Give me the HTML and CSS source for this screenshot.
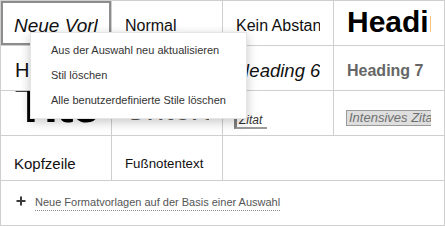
FILE: index.html
```html
<!DOCTYPE html>
<html lang="de">
<head>
<meta charset="utf-8">
<link rel="stylesheet" href="styles.css">
</head>
<body>
<div class="gallery">
  <div class="grid">
    <div class="cell selected"><div class="clip s-neue">Neue Vorlage</div></div>
    <div class="cell"><div class="clip s-normal">Normal</div></div>
    <div class="cell"><div class="clip s-normal">Kein Abstand</div></div>
    <div class="cell"><div class="clip s-h1">Heading 1</div></div>

    <div class="cell"><div class="clip s-h2">Heading 2</div></div>
    <div class="cell"><div class="clip s-h3">Heading 3</div></div>
    <div class="cell"><div class="clip s-h6">Heading 6</div></div>
    <div class="cell"><div class="clip s-h7">Heading 7</div></div>

    <div class="cell"><div class="clip s-title">Titel</div></div>
    <div class="cell"><div class="clip s-subtitle">Untertitel</div></div>
    <div class="cell"><div class="clip s-quote-wrap"><span class="s-quote">Zitat</span></div></div>
    <div class="cell"><div class="clip s-iquote-wrap"><span class="s-iquote">Intensives Zitat</span></div></div>

    <div class="cell"><div class="clip s-header">Kopfzeile</div></div>
    <div class="cell"><div class="clip s-footnote">Fußnotentext</div></div>
    <div class="cell filler"></div>
  </div>
  <div class="footer">
    <svg class="plus" width="10" height="10" viewBox="0 0 10 10"><path d="M5 0.5V9.5M0.5 5H9.5" stroke="#3a3a3a" stroke-width="2"/></svg>
    <span class="new-link">Neue Formatvorlagen auf der Basis einer Auswahl</span>
  </div>

  <div class="menu">
    <div class="menu-item">Aus der Auswahl neu aktualisieren</div>
    <div class="menu-item">Stil löschen</div>
    <div class="menu-item">Alle benutzerdefinierte Stile löschen</div>
  </div>
</div>
</body>
</html>
```
FILE: styles.css
```css
html, body {
  margin: 0;
  padding: 0;
  background: #fff;
}
body {
  font-family: "Liberation Sans", Arial, sans-serif;
  color: #111;
}
.gallery {
  position: relative;
  width: 444px;
  border-left: 1px solid #cfcfcf;
  border-top: 1px solid #cfcfcf;
}
.grid {
  display: grid;
  grid-template-columns: repeat(4, 111px);
  grid-auto-rows: 45px;
}
.cell {
  display: flex;
  align-items: center;
  padding: 0 13px;
  border-right: 1px solid #cfcfcf;
  border-bottom: 1px solid #cfcfcf;
  min-width: 0;
  overflow: hidden;
}
.cell.selected {
  box-shadow: inset 0 0 0 2px #8c8c8c;
}
.cell.filler {
  grid-column: span 2;
}
.clip {
  flex: 1;
  min-width: 0;
  overflow: hidden;
  white-space: nowrap;
}
.s-neue { font-size: 19px; font-style: italic; color: #111; margin-top: 6px; }
.s-normal { font-size: 16px; color: #111; margin-top: 6px; }
.s-h1 { font-size: 30px; font-weight: bold; color: #000; margin-top: -3px; }
.s-h2 { font-size: 20px; color: #111; margin-top: 5px; padding-left: 1px; letter-spacing: 1px; }
.s-h3 { font-size: 17px; color: #111; margin-top: 6px; }
.s-h6 { font-size: 18.5px; font-style: italic; color: #111; margin-top: 6px; }
.s-h7 { font-size: 16px; font-weight: bold; color: #666; margin-top: 6px; }
.s-title { font-size: 52px; font-weight: bold; color: #000; margin-top: -18px; letter-spacing: -2px; padding-left: 1px; }
.s-subtitle { font-size: 32px; font-style: italic; color: #595959; margin-top: -7px; }
.s-quote-wrap { margin-left: -2px; padding: 4px 0 2px; margin-top: 10px; }
.s-quote {
  display: inline-block;
  font-size: 12px;
  font-style: italic;
  color: #333;
  border-left: 3px solid #808080;
  border-bottom: 2px solid #9a9a9a;
  padding: 1px 5px 0 2px;
  line-height: 13px;
}
.s-iquote-wrap { margin-left: -1px; margin-top: 7px; }
.s-iquote {
  display: inline-block;
  font-size: 13px;
  font-style: italic;
  color: #707070;
  background: #dedede;
  border: 1px solid #9a9a9a;
  padding: 0 2px;
  line-height: 14px;
}
.s-header { font-size: 15px; color: #111; margin-top: 10px; }
.s-footnote { font-size: 13.3px; color: #111; margin-top: 10px; }

.footer {
  display: flex;
  align-items: center;
  gap: 9px;
  height: 44px;
  padding-left: 15px;
  border-right: 1px solid #cfcfcf;
  border-bottom: 1px solid #cfcfcf;
}
.plus {
  flex: none;
  margin-top: -5px;
}
.new-link {
  font-size: 11px;
  color: #555;
  border-bottom: 1px dotted #8a8a8a;
  line-height: 13px;
  padding-bottom: 1px;
}

.menu {
  position: absolute;
  left: 29px;
  top: 31px;
  width: 215px;
  padding: 5px 0;
  background: #fff;
  border: 1px solid #e4e4e4;
  box-shadow: 0 3px 10px rgba(0, 0, 0, 0.22);
}
.menu-item {
  height: 25px;
  line-height: 25px;
  padding-left: 20px;
  font-size: 11px;
  color: #333;
  white-space: nowrap;
}
```
